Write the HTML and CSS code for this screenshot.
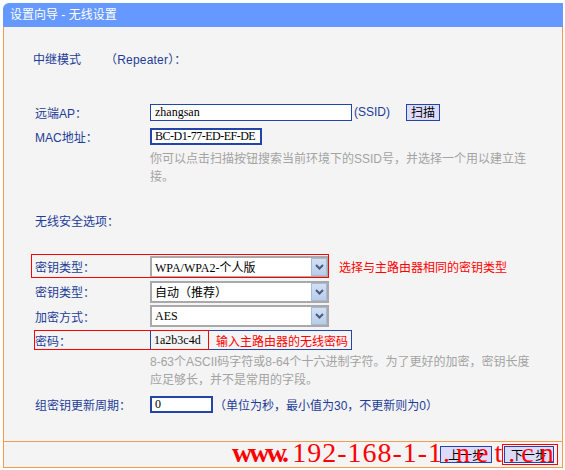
FILE: index.html
```html
<!DOCTYPE html>
<html lang="zh-CN">
<head>
<meta charset="utf-8">
<title>设置向导 - 无线设置</title>
<link rel="stylesheet" href="styles.css">
</head>
<body>
<div class="win">
  <div class="titlebar">设置向导 - 无线设置</div>
  <div class="panel">
    <div class="content">
      <div class="row mode"><span class="modelbl">中继模式</span><span class="modeval">（Repeater）：</span></div>

      <div class="row ap"><span class="lbl">远端AP：</span><div class="inp w202">zhangsan</div><span class="ssid">(SSID)</span><button class="btn scan">扫描</button></div>
      <div class="row"><span class="lbl">MAC地址：</span><div class="inp thick w112 mac">BC-D1-77-ED-EF-DE</div></div>
      <p class="hint h1">你可以点击扫描按钮搜索当前环境下的SSID号，并选择一个用以建立连接。</p>

      <div class="row sec"><span class="lbl">无线安全选项：</span></div>

      <div class="row sel first">
        <span class="lbl">密钥类型：</span>
        <div class="select"><span class="val">WPA/WPA2-个人版</span><span class="arrow"><svg width="9" height="6" viewBox="0 0 9 6"><path d="M1 1 L4.5 4.5 L8 1" fill="none" stroke="#4a5b7c" stroke-width="2"/></svg></span></div>
        <span class="tip">选择与主路由器相同的密钥类型</span>
        <span class="mark mark-type"></span>
      </div>
      <div class="row sel">
        <span class="lbl">密钥类型：</span>
        <div class="select"><span class="val">自动（推荐）</span><span class="arrow"><svg width="9" height="6" viewBox="0 0 9 6"><path d="M1 1 L4.5 4.5 L8 1" fill="none" stroke="#4a5b7c" stroke-width="2"/></svg></span></div>
      </div>
      <div class="row sel short">
        <span class="lbl">加密方式：</span>
        <div class="select"><span class="val">AES</span><span class="arrow"><svg width="9" height="6" viewBox="0 0 9 6"><path d="M1 1 L4.5 4.5 L8 1" fill="none" stroke="#4a5b7c" stroke-width="2"/></svg></span></div>
      </div>
      <div class="row sel short">
        <span class="lbl">密码：</span>
        <div class="pwbox"><span class="pwval">1a2b3c4d</span><span class="pwtip">输入主路由器的无线密码</span></div>
        <span class="mark mark-pw"></span>
      </div>
      <p class="hint h2">8-63个ASCII码字符或8-64个十六进制字符。为了更好的加密，密钥长度应足够长，并不是常用的字段。</p>

      <div class="row gk"><span class="lbl">组密钥更新周期：</span><div class="inp thick w63">0</div><span class="unit">（单位为秒，最小值为30，不更新则为0）</span></div>
    </div>
    <div class="footer">
      <button class="btn nav prev">上一步</button>
      <span class="nextwrap"><button class="btn nav next">下一步</button><span class="mark mark-next"></span></span>
      <div class="watermark"><b>www.</b><span class="num">192-168-1-1</span><span class="dom">.net.cn</span></div>
    </div>
  </div>
</div>
</body>
</html>
```

FILE: styles.css
```css
* { box-sizing: border-box; }
html, body { margin: 0; padding: 0; background: #ffffff; }
body {
  font-family: "Liberation Sans", "Noto Sans CJK SC", sans-serif;
  font-size: 12px;
  color: #1d3c98;
}
.win {
  width: 560px;
  margin: 3px 0 0 3px;
}
.titlebar {
  height: 24px;
  line-height: 24px;
  background: #6699ff;
  color: #ffffff;
  padding-left: 7px;
  border-top-left-radius: 6px;
  font-size: 12px;
}
.panel {
  background: #f4f4f4;
  border-left: 1px solid #f39c4c;
  border-right: 1px solid #f39c4c;
  border-bottom: 1px solid #f39c4c;
}
.content {
  padding: 19px 0 25px 31px;
  border-bottom: 1px solid #f39c4c;
}
.row {
  display: flex;
  align-items: center;
  height: 24px;
  position: relative;
  white-space: nowrap;
}
.lbl { width: 115px; flex: none; }
.mode { margin-left: -2px; }
.modelbl { width: 72px; }
.modeval { letter-spacing: 0.2px; }
.ap { margin-top: 30px; }
.inp {
  height: 17px;
  border: 1px solid #2344a8;
  background: #ffffff;
  color: #000000;
  font-family: "Liberation Serif", "Noto Sans CJK SC", serif;
  font-size: 12px;
  line-height: 15px;
  padding-left: 4px;
  overflow: hidden;
}
.inp.thick { border-width: 2px; padding-left: 3px; line-height: 13px; }
.mac { letter-spacing: -0.5px; }
.w202 { width: 202px; }
.w112 { width: 112px; }
.w63 { width: 63px; }
.ssid { margin-left: 2px; }
.btn {
  font-family: "Noto Sans CJK SC", sans-serif;
  font-size: 12px;
  color: #000000;
  background: #dcdcfa;
  border: 1px solid #2344a8;
  padding: 0;
  height: 17px;
  line-height: 14px;
}
.scan { width: 34px; margin-left: 16px; }
.hint {
  margin: 2px 0 0 115px;
  width: 384px;
  line-height: 18px;
  color: #a3a3a3;
}
.h2 { margin-top: 1px; }
.sec { margin-top: 22px; }
.sel { height: 25px; }
.sel.first { margin-top: 22px; }
.sel.short { height: 24px; }
.select {
  width: 179px;
  height: 22px;
  border: 2px solid #a9a9ab;
  background: #ffffff;
  display: flex;
  align-items: center;
  justify-content: space-between;
  color: #000000;
  font-family: "Liberation Serif", "Noto Sans CJK SC", serif;
}
.val { padding-left: 3px; }
.arrow {
  width: 16px;
  height: 18px;
  background: linear-gradient(#d3e0f3, #b9cde9);
  border: 1px solid #a7bad8;
  display: flex;
  align-items: center;
  justify-content: center;
}
.tip { color: #ff0000; margin-left: 10px; }
.mark {
  position: absolute;
  border: 1px solid #ff0000;
  pointer-events: none;
}
.mark-type { left: -4px; top: 0; width: 298px; height: 24px; }
.pwbox {
  width: 202px;
  height: 20px;
  border: 1px solid #2344a8;
  display: flex;
  align-items: center;
}
.pwval {
  width: 65px;
  padding-left: 3px;
  color: #000000;
  font-family: "Liberation Serif", serif;
}
.pwtip { color: #ff0000; }
.mark-pw { left: -1px; top: 2px; width: 175px; height: 20px; }
.gk { margin-top: 3px; }
.unit { margin-left: 1px; }
.footer {
  height: 25px;
  position: relative;
  display: flex;
  align-items: center;
  justify-content: flex-end;
  padding-right: 8px;
}
.nav { height: 17px; }
.prev { width: 52px; }
.nextwrap { position: relative; margin-left: 12px; display: flex; }
.next { width: 50px; }
.mark-next { top: -2px; left: -2px; right: -4px; bottom: -2px; }
.watermark {
  position: absolute;
  left: 228px;
  top: -3px;
  font-family: "Liberation Serif", serif;
  font-size: 28px;
  line-height: 28px;
  color: #ff0000;
  white-space: nowrap;
  pointer-events: none;
}
.watermark b { letter-spacing: -3px; margin-right: 6px; }
.num { letter-spacing: 1px; }
.dom { letter-spacing: 6px; }
```
